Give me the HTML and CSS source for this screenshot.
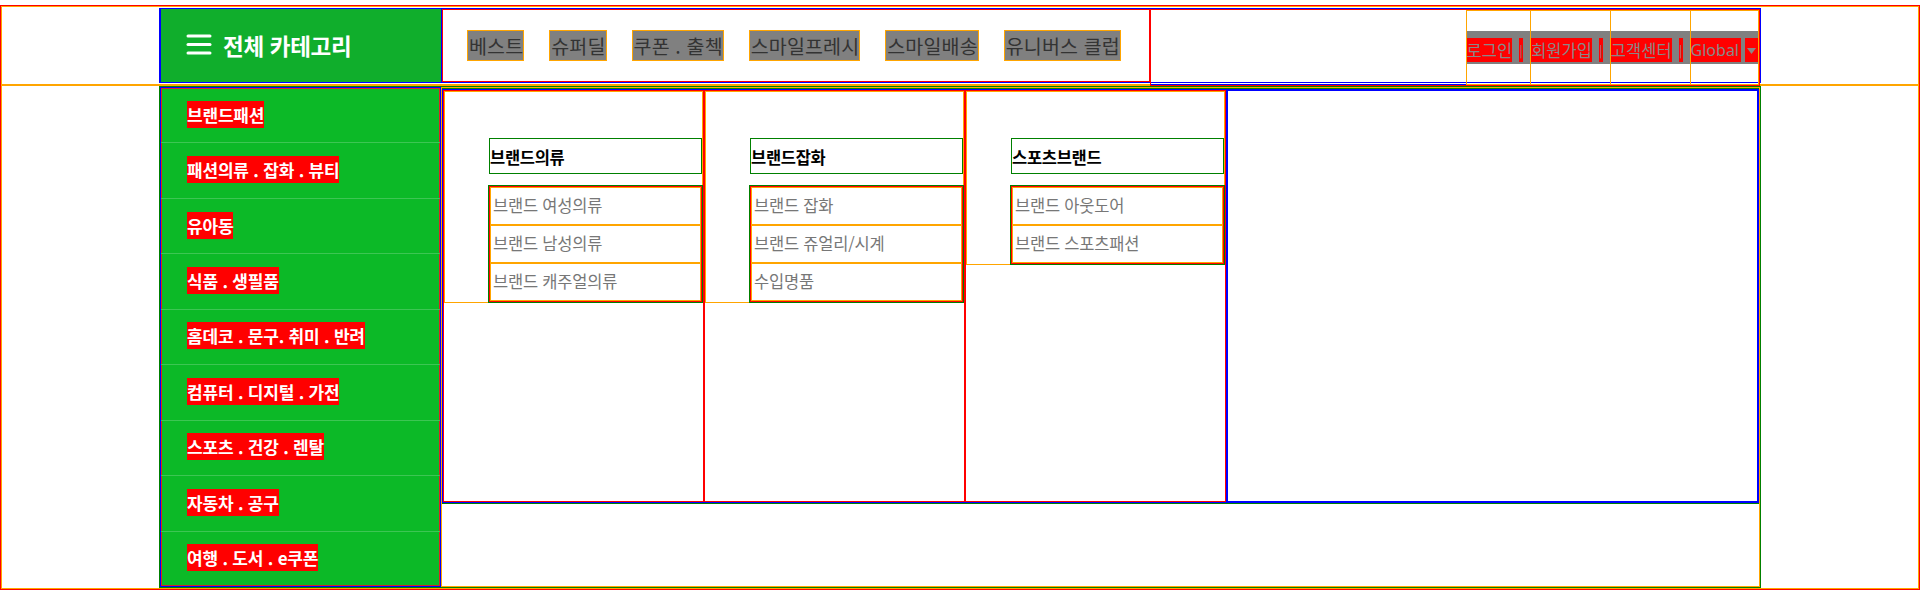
FILE: index.html
```html
<!DOCTYPE html>
<html lang="ko">

<head>
    <meta charset="UTF-8">
    <meta name="viewport" content="width=device-width, initial-scale=1.0">
    <title>Document</title>
    <link rel="stylesheet" href="styles.css">
</head>

<body>
    <div class="page">
        <div class="header">
            <div class="hd-inner">
                <div class="all-cate">
                    <svg class="ico-menu" width="26" height="22" viewBox="0 0 26 22">
                        <rect x="0.5" y="0.5" width="25" height="3" rx="1.5" fill="#fff"/>
                        <rect x="0.5" y="9" width="25" height="3" rx="1.5" fill="#fff"/>
                        <rect x="0.5" y="17.5" width="25" height="3" rx="1.5" fill="#fff"/>
                    </svg>
                    <span class="all-txt">전체 카테고리</span>
                </div>
                <ul class="gnb">
                    <li><a class="gnb-link">베스트</a></li>
                    <li><a class="gnb-link">슈퍼딜</a></li>
                    <li><a class="gnb-link">쿠폰 . 출첵</a></li>
                    <li><a class="gnb-link">스마일프레시</a></li>
                    <li><a class="gnb-link">스마일배송</a></li>
                    <li><a class="gnb-link">유니버스 클럽</a></li>
                </ul>
                <div class="util">
                    <ul class="util-list">
                        <li><a class="util-link"><span class="util-txt">로그인</span><span class="sep">|</span></a></li>
                        <li><a class="util-link"><span class="util-txt">회원가입</span><span class="sep">|</span></a></li>
                        <li><a class="util-link"><span class="util-txt">고객센터</span><span class="sep">|</span></a></li>
                        <li><a class="util-link"><span class="util-txt global">Global</span><span class="arrow"><svg width="9" height="6" viewBox="0 0 9 6"><path d="M0 0H9L4.5 6Z" fill="#888"/></svg></span></a></li>
                    </ul>
                </div>
            </div>
        </div>
        <div class="content">
            <div class="ct-inner">
                <ul class="lnb">
                    <li class="lnb-item"><a class="lnb-txt">브랜드패션</a></li>
                    <li class="lnb-item"><a class="lnb-txt">패션의류 . 잡화 . 뷰티</a></li>
                    <li class="lnb-item"><a class="lnb-txt">유아동</a></li>
                    <li class="lnb-item"><a class="lnb-txt">식품 . 생필품</a></li>
                    <li class="lnb-item"><a class="lnb-txt">홈데코 . 문구. 취미 . 반려</a></li>
                    <li class="lnb-item"><a class="lnb-txt">컴퓨터 . 디지털 . 가전</a></li>
                    <li class="lnb-item"><a class="lnb-txt">스포츠 . 건강 . 렌탈</a></li>
                    <li class="lnb-item"><a class="lnb-txt">자동차 . 공구</a></li>
                    <li class="lnb-item"><a class="lnb-txt">여행 . 도서 . e쿠폰</a></li>
                </ul>
                <div class="mega">
                    <div class="mega-panel">
                        <div class="col">
                            <div class="col-box">
                                <h3 class="col-tit">브랜드의류</h3>
                                <ul class="col-list">
                                    <li>브랜드 여성의류</li>
                                    <li>브랜드 남성의류</li>
                                    <li>브랜드 캐주얼의류</li>
                                </ul>
                            </div>
                        </div>
                        <div class="col">
                            <div class="col-box">
                                <h3 class="col-tit">브랜드잡화</h3>
                                <ul class="col-list">
                                    <li>브랜드 잡화</li>
                                    <li>브랜드 쥬얼리/시계</li>
                                    <li>수입명품</li>
                                </ul>
                            </div>
                        </div>
                        <div class="col">
                            <div class="col-box">
                                <h3 class="col-tit">스포츠브랜드</h3>
                                <ul class="col-list">
                                    <li>브랜드 아웃도어</li>
                                    <li>브랜드 스포츠패션</li>
                                </ul>
                            </div>
                        </div>
                        <div class="banner"></div>
                    </div>
                </div>
            </div>
        </div>
    </div>
</body>

</html>
```

FILE: styles.css
```css
*{
    box-sizing: border-box;
    margin: 0;
    padding: 0;
}
body{
    font-family: "Noto Sans CJK KR", "Noto Sans", sans-serif;
    background: #fff;
}
ul{
    list-style: none;
}
.page{
    margin-top: 5px;
    border: 1px solid red;
}
.header{
    border: 1px solid orange;
    padding: 1px 0;
}
.hd-inner{
    width: 1602px;
    height: 75px;
    margin: 0 auto;
    border: 1px solid blue;
    display: flex;
}
.all-cate{
    width: 282px;
    flex-shrink: 0;
    margin-top: -1px;
    height: 75px;
    background-color: #10ae2c;
    border: 1px solid blue;
    display: flex;
    align-items: center;
    padding-left: 25px;
    padding-bottom: 1px;
}
.ico-menu{
    display: block;
    margin-right: 11px;
}
.all-txt{
    color: #fff;
    font-size: 22.5px;
    font-weight: bold;
    letter-spacing: -0.3px;
}
.gnb{
    width: 708px;
    flex-shrink: 0;
    border: 1px solid red;
    display: flex;
    align-items: center;
    padding-left: 24px;
}
.gnb li{
    flex-shrink: 0;
    margin-right: 25px;
}
.gnb-link{
    display: block;
    white-space: nowrap;
    background-color: gray;
    border: 1px solid orange;
    color: #333;
    font-size: 19.5px;
    line-height: 29px;
    letter-spacing: 0.15px;
    padding: 0 0 0 1px;
}
.util{
    width: 610px;
    height: 77px;
    flex-shrink: 0;
    border: 1px solid red;
    box-shadow: inset 0 -1px 0 blue;
    display: flex;
    justify-content: flex-end;
}
.util-list{
    display: flex;
    height: 75px;
}
.util-list li{
    border: 1px solid orange;
    border-right: none;
    display: flex;
    align-items: center;
}
.util-list li:last-child{
    border-right: 1px solid orange;
}
.util-link{
    display: flex;
    align-items: center;
    height: 33px;
    padding-top: 4px;
    padding-right: 7px;
    background-color: gray;
}
.util-list li:last-child .util-link{
    padding-right: 0;
}
.util-txt{
    background-color: red;
    color: #888;
    font-size: 16.5px;
    line-height: 24px;
}
.global{
    font-family: "Noto Sans", sans-serif;
    font-size: 16px;
    padding-right: 2px;
}
.sep{
    background-color: red;
    color: #888;
    font-size: 12px;
    line-height: 24px;
    width: 4px;
    margin-left: 7px;
    text-align: center;
    overflow: hidden;
}
.arrow{
    background-color: red;
    width: 13px;
    height: 24px;
    margin-left: 4px;
    display: flex;
    align-items: center;
    justify-content: center;
}
.arrow svg{
    display: block;
    margin-top: 2px;
}
.content{
    border: 1px solid orange;
}
.ct-inner{
    width: 1602px;
    margin: 0 auto;
    border: 1px solid green;
    display: flex;
}
.lnb{
    width: 281px;
    flex-shrink: 0;
    height: 500px;
    background-color: #0cb927;
    border: 1px solid blue;
    box-shadow: inset 0 0 0 1px #d22;
    display: flex;
    flex-direction: column;
}
.lnb-item{
    flex: 1;
    display: flex;
    align-items: center;
    padding-left: 26px;
    padding-bottom: 2px;
    border-bottom: 1px solid #3dc653;
}
.lnb-item:last-child{
    border-bottom: none;
}
.lnb-txt{
    background-color: red;
    color: #fff;
    font-size: 17px;
    font-weight: bold;
    line-height: 27px;
    letter-spacing: -0.2px;
}
.mega{
    flex: 1;
    border: 1px solid orange;
    padding-top: 1px;
}
.mega-panel{
    height: 414px;
    border: 1px solid blue;
    box-shadow: 0 -1px 0 green, 0 1px 0 green;
    display: flex;
}
.col{
    width: 261px;
    flex-shrink: 0;
    border: 1px solid red;
}
.col-box{
    border: 1px solid orange;
    padding: 46px 0 0 44px;
}
.col-tit{
    height: 36px;
    border: 1px solid green;
    font-size: 16.5px;
    font-weight: bold;
    color: #000;
    line-height: 36px;
    letter-spacing: -0.3px;
    margin-bottom: 12px;
}
.col-list{
    border: 1px solid red;
    outline: 1px solid green;
}
.col-list li{
    height: 38px;
    border: 1px solid orange;
    color: #777;
    font-size: 16.5px;
    line-height: 35px;
    padding-left: 2px;
    letter-spacing: -0.2px;
}
.banner{
    flex: 1;
    border: 1px solid blue;
    border-left-width: 2px;
}
```
